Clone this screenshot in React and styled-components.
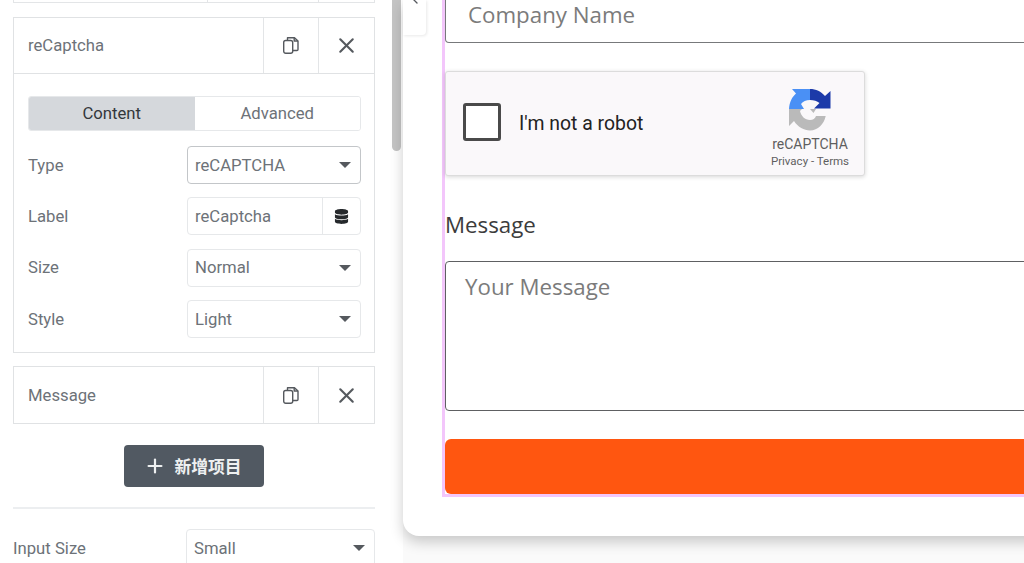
import React from "react";
import styled, { createGlobalStyle } from "styled-components";
import { X, Plus, ChevronLeft } from "lucide-react";
import { FaDatabase } from "react-icons/fa";

const Global = createGlobalStyle`
  html, body { margin: 0; padding: 0; background: #fafafa; }
  * { box-sizing: border-box; }
`;

const Page = styled.div`
  display: flex;
  width: 1024px;
  height: 563px;
  overflow: hidden;
  position: relative;
  background: #fafafa;
`;

const Sidebar = styled.aside`
  flex: 0 0 403px;
  height: 563px;
  background: #fff;
  padding: 0 28px 0 13px;
  font-family: Roboto, "Noto Sans CJK SC", sans-serif;
  font-size: 16.7px;
  color: #6d7278;
  position: relative;
  overflow: hidden;
`;

const Thumb = styled.div`
  position: absolute;
  top: 0;
  left: 392px;
  width: 9px;
  height: 151px;
  background: #c4c4c4;
  border-radius: 0 0 5px 5px;
`;

const StubRow = styled.div`
  height: 3px;
  margin-bottom: 14px;
  border: 1px solid #e3e5e7;
  border-top: 0;
  display: flex;
  justify-content: flex-end;
`;

const StubCell = styled.div`
  width: ${(p) => p.$w}px;
  border-left: 1px solid #e3e5e7;
`;

const Item = styled.section`
  border: 1px solid #e0e2e4;
  margin-bottom: 13px;
`;

const ItemHeader = styled.header`
  display: flex;
  height: ${(p) => p.$h}px;
  align-items: stretch;
  border-bottom: ${(p) => (p.$open ? "1px solid #e0e2e4" : "0")};
`;

const ItemTitle = styled.div`
  flex: 1;
  display: flex;
  align-items: center;
  padding-left: 14px;
  color: #6d7278;
`;

const ItemAction = styled.button`
  flex: 0 0 ${(p) => p.$w}px;
  display: flex;
  align-items: center;
  justify-content: center;
  border: 0;
  border-left: 1px solid #e3e5e7;
  background: #fff;
  padding: 0;
  color: #55595e;
`;

const ItemBody = styled.div`
  padding: 22px 13px 14px 14px;
`;

const Tabs = styled.div`
  display: flex;
  height: 35px;
  border: 1px solid #e6e8ea;
  border-radius: 3px;
  overflow: hidden;
  margin-bottom: 15px;
`;

const Tab = styled.div`
  flex: 1;
  display: flex;
  align-items: center;
  justify-content: center;
  padding-bottom: 1px;
  background: ${(p) => (p.$active ? "#d5d8dc" : "#fff")};
  color: ${(p) => (p.$active ? "#33373b" : "#6d7278")};
`;

const Fields = styled.div`
  display: flex;
  flex-direction: column;
  gap: 13.4px;
`;

const Row = styled.div`
  display: flex;
  align-items: center;
  justify-content: space-between;
  height: 38px;
`;

const RowLabel = styled.span`
  color: #6d7278;
`;

const Control = styled.div`
  width: ${(p) => p.$w || 174}px;
  height: 38px;
  flex: none;
  border: 1px solid ${(p) => (p.$focus ? "#c3c6c9" : "#e6e8ea")};
  border-radius: 4px;
  display: flex;
  align-items: center;
  background: #fff;
  color: #6d7278;
`;

const ControlText = styled.span`
  flex: 1;
  padding-left: 7px;
`;

const Caret = styled.i`
  width: 0;
  height: 0;
  border-left: 6px solid transparent;
  border-right: 6px solid transparent;
  border-top: 6px solid #55595e;
  margin-right: 9px;
`;

const Addon = styled.div`
  flex: 0 0 38px;
  height: 100%;
  border-left: 1px solid #e6e8ea;
  display: flex;
  align-items: center;
  justify-content: center;
  color: #26292c;
`;

const AddWrap = styled.div`
  display: flex;
  justify-content: center;
  margin: 21px 0 20px;
`;

const AddButton = styled.button`
  width: 140px;
  height: 42px;
  display: flex;
  align-items: center;
  justify-content: center;
  gap: 8px;
  padding: 0 2px 0 0;
  border: 0;
  border-radius: 4px;
  background: #515962;
  color: #eef0f1;
  font: 700 16.8px Roboto, "Noto Sans CJK SC", sans-serif;
`;

const Rule = styled.hr`
  margin: 0 0 20px;
  border: 0;
  border-top: 2px solid #eceef0;
`;

const Canvas = styled.main`
  flex: 1;
  position: relative;
  min-width: 0;
`;

const Card = styled.div`
  width: 720px;
  height: 536px;
  background: #fff;
  border-radius: 0 0 0 16px;
  box-shadow: 0 6px 14px rgba(0, 0, 0, 0.2);
  padding-left: 39px;
`;

const Toggle = styled.div`
  position: absolute;
  top: 0;
  left: 0;
  width: 23px;
  height: 35px;
  background: #fff;
  border-radius: 0 0 4px 0;
  box-shadow: 1px 1px 3px rgba(0, 0, 0, 0.09);
  display: flex;
  justify-content: center;
  color: #55595e;

  svg {
    margin-top: -9px;
  }
`;

const Form = styled.form`
  width: 680px;
  height: 497px;
  border-left: 3px solid #f3c6fb;
  border-bottom: 3px solid #f3c6fb;
  font-family: "Open Sans", sans-serif;
  display: flex;
  flex-direction: column;
`;

const CompanyInput = styled.div`
  height: 43px;
  flex: none;
  border: 1px solid #77797b;
  border-top: 0;
  border-radius: 0 0 0 4px;
  padding-left: 22px;
  font-size: 22.3px;
  line-height: 29px;
  color: #7b7b7b;
`;

const Captcha = styled.div`
  width: 420px;
  height: 105px;
  flex: none;
  margin-top: 28px;
  background: #faf8fa;
  border: 1px solid #dcdcdc;
  border-radius: 3px;
  box-shadow: 0 1px 4px rgba(0, 0, 0, 0.16);
  display: flex;
  align-items: center;
  padding-left: 17px;
  font-family: Roboto, sans-serif;
`;

const Check = styled.div`
  width: 38px;
  height: 38px;
  margin-bottom: 3px;
  background: #fff;
  border: 3px solid #4a4a4a;
  border-radius: 3px;
`;

const CaptchaLabel = styled.span`
  margin-left: 18px;
  font-size: 19.4px;
  color: #222;
`;

const Brand = styled.div`
  margin-left: auto;
  width: 112px;
  display: flex;
  flex-direction: column;
  align-items: center;
  padding: 11px 0 0 4px;
  color: #5f5f5f;
`;

const BrandName = styled.div`
  font-size: 14px;
  line-height: 16px;
  margin-top: 5px;
`;

const BrandLinks = styled.div`
  font-size: 11.5px;
  line-height: 18px;
  white-space: nowrap;
`;

const MessageLabel = styled.label`
  margin-top: 33px;
  height: 32px;
  font-size: 22.3px;
  line-height: 32px;
  color: #3c3c3c;
`;

const MessageInput = styled.div`
  margin-top: 20px;
  height: 150px;
  flex: none;
  border: 1px solid #5e6062;
  border-radius: 4px;
  padding: 8px 19px;
  font-size: 22.3px;
  line-height: 34px;
  color: #7b7b7b;
`;

const Submit = styled.button`
  margin-top: 28px;
  height: 55px;
  flex: none;
  border: 0;
  border-radius: 6px;
  background: #ff5610;
`;

const CopyIcon = () => (
  <svg width="16" height="17" viewBox="0 0 16 17" fill="none" stroke="currentColor" strokeWidth="1.4" strokeLinejoin="round">
    <path d="M4.500 3.500V0.700H11.500L15 4V12.500A1 1 0 0 1 14 13.500H9.500" />
    <path d="M11.200 0.700V4H15" />
    <rect x="0.700" y="3.500" width="9" height="12.800" rx="2" fill="#fff" />
  </svg>
);

const RecaptchaLogo = () => (
  <svg width="42" height="42" viewBox="0 0 42 42">
    <path fill="#4a90f5" d="M0 20C0.500 13 3 8 7 4.500L3 0H21V11C17 11 14 12.500 12 15L15 20Z" />
    <path fill="#1c3aa9" d="M21 0C27 0 32 2.500 36 7L41.500 2V19.500H25L30.500 14C28 12 25 11 21 11Z" />
    <path fill="#bababa" d="M0 20V37L5 32C9 38 15 41.500 21 41.500C29 41.500 35 35 36.700 27H27C26 29.500 24 31 21 31C16 31 12 27 11 22L13 20ZM21 20H27L24.500 24Z" />
  </svg>
);

const ItemHead = ({ title, open, h }) => (
  <ItemHeader $open={open} $h={h}>
    <ItemTitle>{title}</ItemTitle>
    <ItemAction $w={55}><CopyIcon /></ItemAction>
    <ItemAction $w={56}><X size={25} strokeWidth={2} /></ItemAction>
  </ItemHeader>
);

const SelectRow = ({ label, value, focus }) => (
  <Row>
    <RowLabel>{label}</RowLabel>
    <Control $focus={focus}>
      <ControlText>{value}</ControlText>
      <Caret />
    </Control>
  </Row>
);

export default function App() {
  return (
    <Page>
      <Global />
      <Sidebar>
        <Thumb />
        <StubRow>
          <StubCell $w={111} />
          <StubCell $w={56} />
        </StubRow>
        <Item>
          <ItemHead title="reCaptcha" open h={56} />
          <ItemBody>
            <Tabs>
              <Tab $active>Content</Tab>
              <Tab>Advanced</Tab>
            </Tabs>
            <Fields>
              <SelectRow label="Type" value="reCAPTCHA" focus />
              <Row>
                <RowLabel>Label</RowLabel>
                <Control>
                  <ControlText>reCaptcha</ControlText>
                  <Addon><FaDatabase size={15} /></Addon>
                </Control>
              </Row>
              <SelectRow label="Size" value="Normal" />
              <SelectRow label="Style" value="Light" />
            </Fields>
          </ItemBody>
        </Item>
        <Item>
          <ItemHead title="Message" h={56} />
        </Item>
        <AddWrap>
          <AddButton type="button">
            <Plus size={22} strokeWidth={2.4} />
            新增项目
          </AddButton>
        </AddWrap>
        <Rule />
        <Row>
          <RowLabel>Input Size</RowLabel>
          <Control $w={189}>
            <ControlText>Small</ControlText>
            <Caret />
          </Control>
        </Row>
      </Sidebar>
      <Canvas>
        <Card>
          <Form>
            <CompanyInput>Company Name</CompanyInput>
            <Captcha>
              <Check />
              <CaptchaLabel>I'm not a robot</CaptchaLabel>
              <Brand>
                <RecaptchaLogo />
                <BrandName>reCAPTCHA</BrandName>
                <BrandLinks>Privacy - Terms</BrandLinks>
              </Brand>
            </Captcha>
            <MessageLabel>Message</MessageLabel>
            <MessageInput>Your Message</MessageInput>
            <Submit type="button" aria-label="Submit" />
          </Form>
        </Card>
        <Toggle><ChevronLeft size={16} /></Toggle>
      </Canvas>
    </Page>
  );
}
